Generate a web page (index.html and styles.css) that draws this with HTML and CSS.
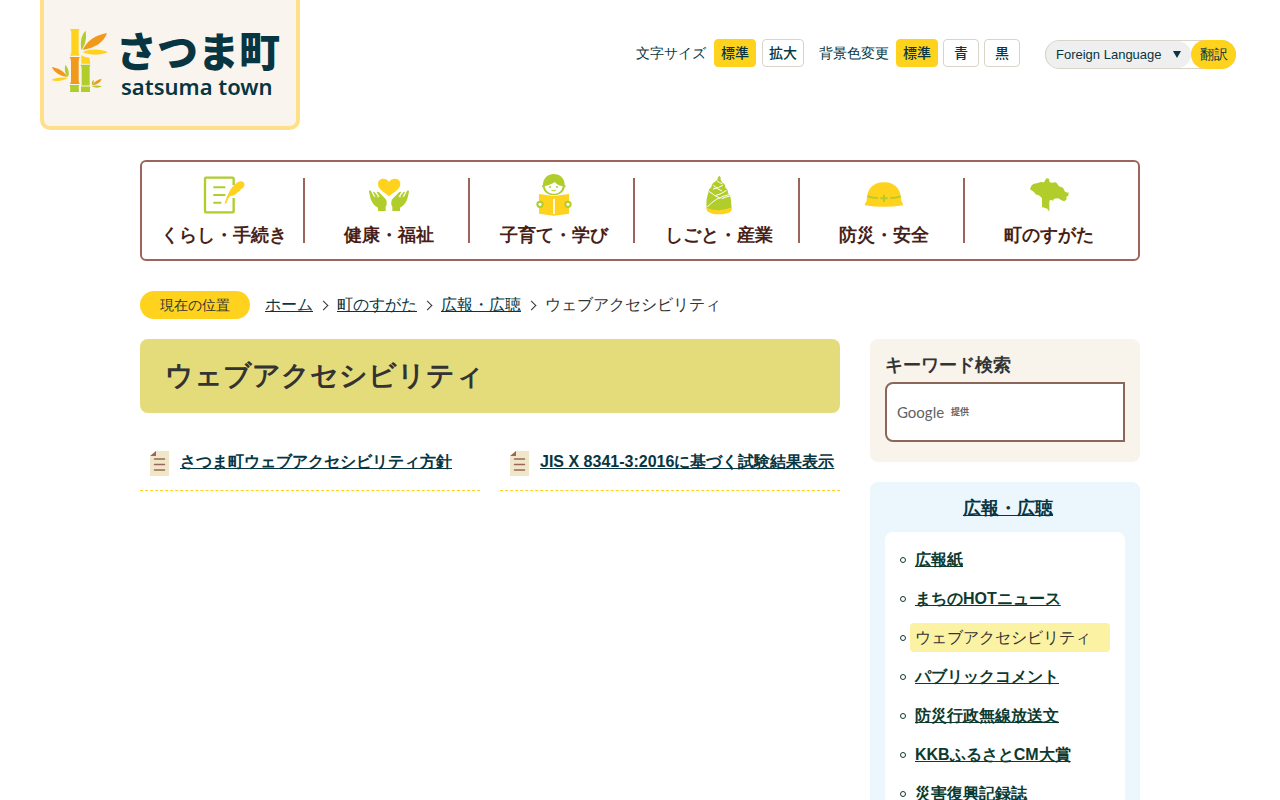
FILE: index.html
```html
<!DOCTYPE html>
<html lang="ja">
<head>
<meta charset="utf-8">
<meta name="viewport" content="width=device-width, initial-scale=1">
<title>ウェブアクセシビリティ/さつま町</title>
<link rel="stylesheet" href="styles.css">
</head>
<body>
<header class="header">
  <a class="logo" href="#">
    <svg class="logo-mark" viewBox="60 84 180 195" aria-hidden="true">
      <path fill="#ffd21e" d="M120 87h29q-4 4-3 10v59q0 7 2 11h-28q4-6 4-12V99q0-8-4-12z"/>
      <path fill="#f0991b" d="M119 171h30q-3 6-3 13v56q0 8 3 12h-29q4-7 3-13v-55q0-7-4-13z"/>
      <path fill="#ffd21e" d="M154 166q10 7 24 7l3 18h-27z"/>
      <path fill="#b0cd2c" d="M151 194h30q-3 6-2 13v44q-1 7 2 11h-1v14h-27v-14q3-5 2-12v-44q0-7-4-12zM119 255h28l-1 8 1 13h-27l1-12z"/>
      <path stroke="#f9f4ee" stroke-width="3" d="M151 258h30"/>
      <path fill="#b0cd2c" d="M154 150c-4-24 0-46 13-58 3 24-1 43-13 58z"/>
      <path fill="#f0991b" d="M158 150c13-28 38-45 73-51-9 27-35 45-73 51z"/>
      <path fill="#ffd21e" d="M157 156c24-10 55-10 77 1-26 10-53 9-77-1z"/>
      <path fill="#f0991b" d="M65 201c20 3 38 13 47 30-20-2-38-12-47-30z"/>
      <path fill="#b0cd2c" d="M106 194c10 12 13 25 8 37-9-8-11-22-8-37z"/>
      <path fill="#ffd21e" d="M64 240c16-8 33-9 50-6-17 9-34 12-50 6z"/>
      <path fill="#b0cd2c" d="M186 256c-2-9 0-14 5-17 2 7 0 12-5 17zM185 258c10-3 23-2 31 1-10 6-22 5-31-1z"/>
      <path fill="#f0991b" d="M187 256c5-10 14-17 28-20-3 11-13 17-28 20z"/>
    </svg>
    <span class="logo-text"><span class="logo-name">さつま町</span><span class="logo-roman">satsuma town</span></span>
  </a>
  <div class="tools">
    <div class="tool-group">
      <span class="tool-label">文字サイズ</span>
      <button class="tool-button is-on" type="button">標準</button>
      <button class="tool-button" type="button">拡大</button>
    </div>
    <div class="tool-group tool-color">
      <span class="tool-label">背景色変更</span>
      <button class="tool-button is-on" type="button">標準</button>
      <button class="tool-button is-single" type="button">青</button>
      <button class="tool-button is-single" type="button">黒</button>
    </div>
    <form class="language">
      <span class="language-field">
        <select class="language-select" aria-label="Foreign Language">
          <option>Foreign Language</option>
          <option>English</option>
        </select>
        <svg class="language-arrow" viewBox="0 0 8 7" aria-hidden="true"><path d="M0 0h8L4 7z"/></svg>
      </span>
      <button class="language-submit" type="button">翻訳</button>
    </form>
  </div>
</header>

<div class="container">
  <nav class="global-nav">
    <ul class="global-list">
      <li class="global-item"><a class="global-link" href="#">
        <svg class="global-icon" viewBox="206 54 120 132" aria-hidden="true">
          <path d="M295 90V71q0-3-3-3h-80q-3 0-3 3v98q0 3 3 3h80q3 0 3-3v-40" fill="none" stroke="#b0cd2c" stroke-width="7"/>
          <path d="M234 97h36M234 120h36M234 143h24" stroke="#b0cd2c" stroke-width="6"/>
          <path d="M268 146c7-23 15-43 31-58 12-11 24-12 28-2 2 9-5 14-11 17 0 5-6 8-11 10-5 7-13 9-20 10-6 6-9 13-12 22z" fill="#ffd21e"/>
        </svg>くらし・手続き</a></li>
      <li class="global-item"><a class="global-link" href="#">
        <svg class="global-icon" viewBox="702 54 120 132" aria-hidden="true">
          <path d="M762 124c-15-13-33-21-33-37 0-18 24-21 33-6 10-15 34-12 34 6 0 16-18 24-34 37z" fill="#ffd21e"/>
          <path fill="#b0cd2c" d="M702 110c0-5 6-4 7 0l7 14 4 1-6-11c-1-5 4-4 6-1l12 13 2-1-8-11c-2-5 3-5 6-2l19 19c5 5 4 12 4 18l-3 6v13h-23v-10c-12-6-18-15-22-26z"/>
          <path transform="translate(1524)" fill="#b0cd2c" d="M-702 110c0-5-6-4-7 0l-7 14-4 1 6-11c1-5-4-4-6-1l-12 13-2-1 8-11c2-5-3-5-6-2l-19 19c-5 5-4 12-4 18l3 6v13h23v-10c12-6 18-15 22-26z"/>
          <path d="M714 112l6 15M726 114l3 14M810 112l-6 15M798 114l-3 14" stroke="#fff" stroke-width="2"/>
        </svg>健康・福祉</a></li>
      <li class="global-item"><a class="global-link" href="#">
        <svg class="global-icon" viewBox="206 54 120 132" aria-hidden="true">
          <path d="M233 91c-1-45 66-45 65 0 4 0 4 6 0 6-4 32-62 32-65 0-4 0-4-6 0-6z" fill="#b0cd2c"/>
          <path d="M238 93c12-1 21-6 30-12 7 8 15 12 24 12-2 31-51 31-54 0z" fill="#fff"/>
          <circle cx="254" cy="96" r="3" fill="#b0cd2c"/><circle cx="275" cy="96" r="3" fill="#b0cd2c"/>
          <path d="M258 105q7 6 14 0" stroke="#b0cd2c" stroke-width="3" fill="none"/>
          <path d="M221 117l45 6 45-6v59l-45 6-45-6z" fill="#ffd21e"/>
          <path d="M266 131v46" stroke="#fff" stroke-width="5"/>
          <circle cx="224" cy="148" r="8" fill="#fff" stroke="#b0cd2c" stroke-width="6"/><circle cx="308" cy="148" r="8" fill="#fff" stroke="#b0cd2c" stroke-width="6"/>
        </svg>子育て・学び</a></li>
      <li class="global-item"><a class="global-link" href="#">
        <svg class="global-icon" viewBox="702 54 120 132" aria-hidden="true">
          <path d="M763 62q6 4 4 12l6 10q9 3 8 14 9 6 8 16 8 6 9 24l2 22q-38 20-75 0-3-27 5-46 0-11 9-17 0-11 11-17l8-7q-1-7 5-11z" fill="#b0cd2c"/>
          <path d="M755 77q8 7 17 9M745 91q13 12 26 17M774 90q-12 9-30 12M732 109q18 15 34 21M785 106q-17 12-34 16M794 123q-14 4-24 8M727 156q23-28 68-38" fill="none" stroke="#fff" stroke-width="3"/>
          <path d="M724 158q38 16 76-1 5 21-38 21-39-1-38-20z" fill="#ffd21e"/>
        </svg>しごと・産業</a></li>
      <li class="global-item"><a class="global-link" href="#">
        <svg class="global-icon" viewBox="207 54 120 132" aria-hidden="true">
          <path d="M209 151q0-6 6-12c0-35 17-57 52-57s51 22 52 57q6 6 5 12-57 9-115 0z" fill="#ffd21e"/>
          <path d="M218 124q16 5 31 5M317 124q-16 5-31 5M267 119v22M256 130h22" stroke="#b0cd2c" stroke-width="6" fill="none"/>
        </svg>防災・安全</a></li>
      <li class="global-item"><a class="global-link" href="#">
        <svg class="global-icon" viewBox="702 54 120 132" aria-hidden="true">
          <path d="M705 103l4-11 6-5 13-3 9-3 10 1 7-12 8 1 2 10 5 2 14-1 9 12 12 4 6 12 8 3 3-3-1 12-6 3 1 8-7 6-10-4-8-5-13 1-3 7-5-4-6 3v33l-6-9-16-5v-26l-7-8-12-4-5-7z" fill="#b0cd2c"/>
        </svg>町のすがた</a></li>
    </ul>
  </nav>

  <nav class="crumbs" aria-label="現在の位置">
    <span class="crumbs-label">現在の位置</span>
    <ol class="crumbs-list">
      <li class="crumb"><a href="#">ホーム</a></li>
      <li class="crumb"><a href="#">町のすがた</a></li>
      <li class="crumb"><a href="#">広報・広聴</a></li>
      <li class="crumb">ウェブアクセシビリティ</li>
    </ol>
  </nav>

  <div class="columns">
    <main class="main">
      <h1 class="title">ウェブアクセシビリティ</h1>
      <ul class="pages">
        <li class="page">
          <svg class="page-icon" viewBox="0 0 19 25" aria-hidden="true"><path fill="#efe7c8" d="M6 0h13v25H0V6z"/><path fill="#9b655b" d="M6 0v5H0z"/><path stroke="#9b655b" stroke-width="1.5" stroke-linecap="round" d="M4.500 8h10M4.500 13.500h10M4.500 19h10"/></svg>
          <a href="#">さつま町ウェブアクセシビリティ方針</a>
        </li>
        <li class="page">
          <svg class="page-icon" viewBox="0 0 19 25" aria-hidden="true"><path fill="#efe7c8" d="M6 0h13v25H0V6z"/><path fill="#9b655b" d="M6 0v5H0z"/><path stroke="#9b655b" stroke-width="1.5" stroke-linecap="round" d="M4.500 8h10M4.500 13.500h10M4.500 19h10"/></svg>
          <a href="#">JIS X 8341-3:2016に基づく試験結果表示</a>
        </li>
      </ul>
    </main>
    <aside class="side">
      <form class="search">
        <label class="search-label" for="keyword">キーワード検索</label>
        <div class="search-field">
          <input class="search-input" id="keyword" type="text">
          <span class="search-brand"><span class="brand-name">Google</span><span class="brand-note">提供</span></span>
        </div>
      </form>
      <section class="local">
        <h2 class="local-title"><a href="#">広報・広聴</a></h2>
        <ul class="local-list">
          <li class="local-item"><a href="#">広報紙</a></li>
          <li class="local-item"><a href="#">まちのHOTニュース</a></li>
          <li class="local-item"><span class="local-current">ウェブアクセシビリティ</span></li>
          <li class="local-item"><a href="#">パブリックコメント</a></li>
          <li class="local-item"><a href="#">防災行政無線放送文</a></li>
          <li class="local-item"><a href="#">KKBふるさとCM大賞</a></li>
          <li class="local-item"><a href="#">災害復興記録誌</a></li>
        </ul>
      </section>
    </aside>
  </div>
</div>
</body>
</html>
```
FILE: styles.css
```css
*, *::before, *::after { box-sizing: border-box; }

body {
  margin: 0;
  background: #fff;
  color: #333;
  font-family: "Liberation Sans", sans-serif;
  font-size: 16px;
  line-height: 24px;
}

ul, ol { margin: 0; padding: 0; list-style: none; }
a { color: #073642; }
button, select, input { font-family: inherit; color: #073642; }

/* header */
.header {
  display: flex;
  justify-content: space-between;
  align-items: flex-start;
  padding: 0 44px 0 40px;
}
.logo {
  display: flex;
  gap: 6px;
  width: 260px;
  height: 130px;
  padding: 28px 0 0 6px;
  border: 4px solid #ffe088;
  border-top: 0;
  border-radius: 0 0 10px 10px;
  background: #f9f4ee;
  color: #073642;
  text-decoration: none;
}
.logo-mark { width: 60px; height: 65px; }
.logo-text { display: flex; flex-direction: column; white-space: nowrap; }
.logo-name { font: 900 41px/42px "Noto Sans CJK JP", sans-serif; }
.logo-roman { padding-left: 5px; font: 600 22px/32px "Noto Sans", sans-serif; }

.tools { display: flex; align-items: flex-start; padding-top: 39px; }
.tool-group { display: flex; align-items: center; gap: 6px; }
.tool-color { gap: 5px; margin-left: 15px; }
.tool-label { margin-right: 2px; color: #073642; font-size: 14px; line-height: 28px; }
.tool-button {
  width: 42px;
  height: 28px;
  padding: 0 0 2px;
  border: 1px solid #d8d5c8;
  border-radius: 4px;
  background: #fff;
  font: 500 14px/22px "Noto Sans CJK JP", sans-serif;
}
.tool-button.is-single { width: 36px; }
.tool-button.is-on { border-color: #ffd21e; background: #ffd21e; }

.language {
  display: flex;
  height: 29px;
  margin: 1px 0 0 25px;
  border-radius: 15px;
  box-shadow: inset 0 0 0 1px #d8d5c8;
}
.language-field { display: grid; align-items: center; }
.language-select {
  grid-area: 1 / 1;
  width: 146px;
  height: 27px;
  padding: 0 0 0 10px;
  border: 1px solid #d8d5c8;
  border-width: 0 0 0 1px;
  border-radius: 14px;
  background: #efefef;
  font-size: 13px;
  appearance: none;
}
.language-arrow {
  grid-area: 1 / 1;
  justify-self: end;
  width: 8px;
  height: 7px;
  margin-right: 10px;
  fill: #073642;
  pointer-events: none;
}
.language-submit {
  width: 45px;
  padding: 0;
  border: 0;
  border-radius: 15px;
  background: #ffd21e;
  font-size: 14px;
}

.container { max-width: 1000px; margin: 0 auto; padding-top: 30px; }

/* global navigation */
.global-nav { border: 2px solid #9b655b; border-radius: 6px; }
.global-list { display: flex; padding-right: 6px; }
.global-item {
  flex: 1;
  padding: 11px 2px 9px 0;
  background: linear-gradient(#9b655b, #9b655b) no-repeat right 2px center / 2px 65px;
}
.global-item:last-child { background: none; }
.global-link {
  display: flex;
  flex-direction: column;
  align-items: center;
  gap: 3px;
  color: #4a1f17;
  font-size: 18px;
  font-weight: bold;
  line-height: 30px;
  text-decoration: none;
}
.global-icon { width: 40px; height: 44px; overflow: visible; }

/* breadcrumbs */
.crumbs { display: flex; align-items: center; gap: 15px; margin-top: 30px; }
.crumbs-label {
  padding: 0 20px;
  border-radius: 14px;
  background: #ffd21e;
  font-size: 14px;
  line-height: 28px;
}
.crumbs-list { display: flex; }
.crumb { display: flex; align-items: center; }
.crumb:not(:last-child)::after {
  content: "";
  width: 7px;
  height: 7px;
  margin: 0 10px 0 7px;
  border: solid #333;
  border-width: 1px 1px 0 0;
  transform: rotate(45deg);
}

/* columns */
.columns { display: flex; align-items: flex-start; gap: 30px; margin-top: 20px; }
.main { flex: 1; }
.title {
  margin: 0;
  padding: 16px 25px;
  border-radius: 8px;
  background: #e4dc7b;
  font-size: 28px;
  line-height: 42px;
}
.pages { display: grid; grid-template-columns: 1fr 1fr; gap: 20px; margin-top: 28px; }
.page {
  display: flex;
  gap: 11px;
  padding: 9px 0 14px 10px;
  border-bottom: 1px dashed #ffd21e;
  font-weight: bold;
  white-space: nowrap;
}
.page-icon { width: 19px; height: 25px; margin-top: 1px; }

.side { width: 270px; }
.search { padding: 12px 15px 20px; border-radius: 8px; background: #f8f3eb; }
.search-label { display: block; margin-bottom: 3px; font-size: 18px; font-weight: bold; line-height: 28px; }
.search-field { display: grid; align-items: center; }
.search-input {
  grid-area: 1 / 1;
  width: 100%;
  height: 60px;
  padding: 0 10px;
  border: 2px solid #8b675b;
  border-radius: 8px 0 0 8px;
  background: #fff;
  font-size: 16px;
}
.search-brand {
  display: flex;
  grid-area: 1 / 1;
  gap: 7px;
  padding-left: 12px;
  color: #5f6368;
  pointer-events: none;
}
.brand-name { font: 400 15px/24px Lato, sans-serif; }
.brand-note { font: 700 9px/24px "Noto Sans CJK JP", sans-serif; }

.local { margin-top: 20px; padding: 12px 15px 15px; border-radius: 8px; background: #ebf7fd; }
.local-title { margin: 0 0 10px; padding-left: 6px; font-size: 18px; line-height: 28px; text-align: center; }
.local-list { padding: 13px 15px 15px; border-radius: 8px; background: #fff; }
.local-item {
  display: flex;
  align-items: center;
  margin-bottom: 10px;
  font-weight: bold;
  line-height: 29px;
}
.local-item a { margin-left: 9px; color: #0d3a2e; }
.local-item::before {
  content: "";
  width: 6px;
  height: 6px;
  border: 1px solid #0d3a2e;
  border-radius: 50%;
}
.local-current {
  flex: 1;
  margin-left: 4px;
  padding: 0 5px;
  border-radius: 4px;
  background: #fcf2a4;
  font-weight: normal;
}
```
